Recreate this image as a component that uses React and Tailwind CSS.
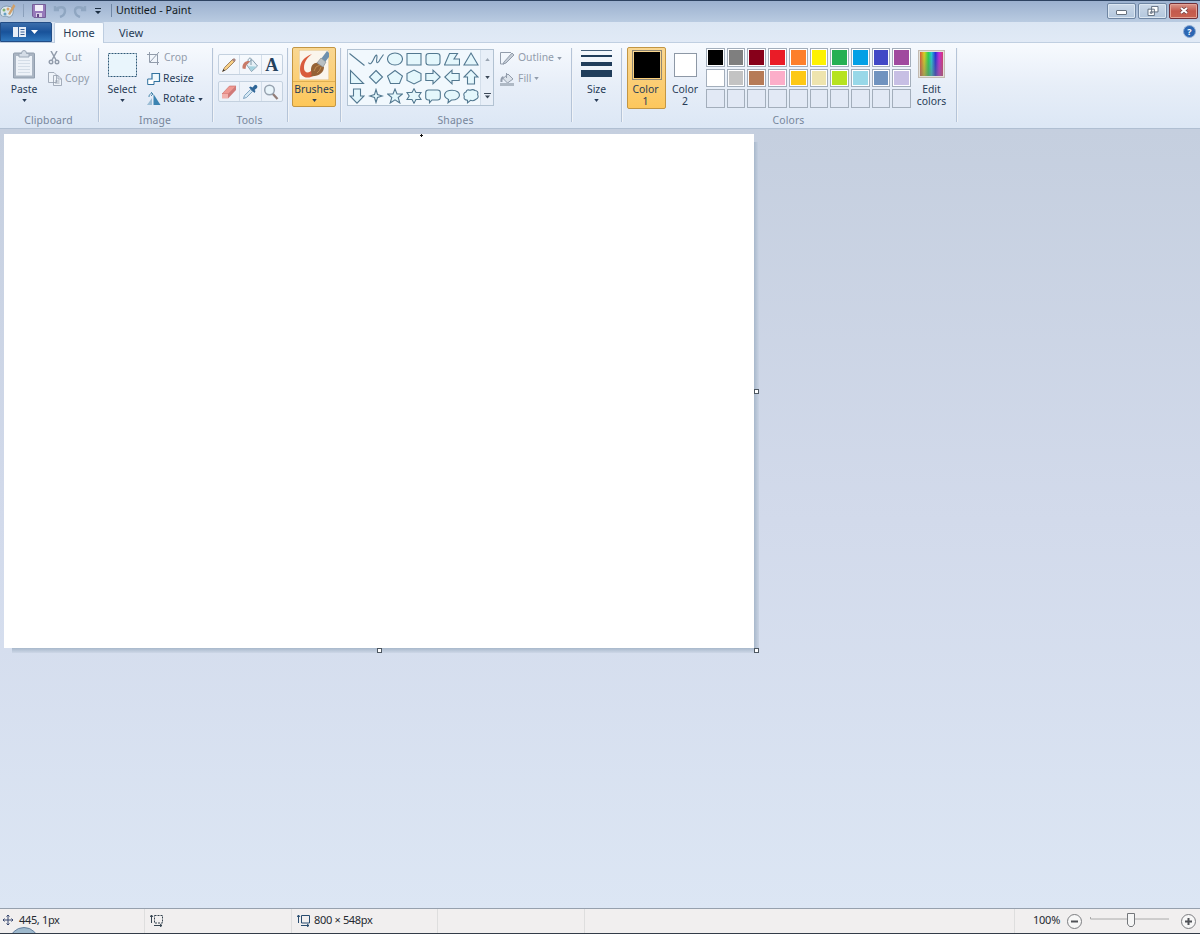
import React from 'react';

const colors = [
    '#000000', '#7f7f7f', '#87001a', '#ea1c27', '#fd7f2b', '#fdf200', '#25b052', '#02a0e6', '#4148c6', '#a04a9f',
    '#ffffff', '#c3c3c3', '#b67b57', '#fcaec9', '#fdc815', '#eee4ae', '#b6e321', '#98d8e8', '#7093bf', '#c7bfe4',
];

const shapes = [
    'M.5 2.5L15.5 14.5',
    'M.5 11.5C2 14.5 4 12 6 7.5C8 3 9.5 3 8.8 7.5C8 13 10 13 12 8.5L15.5 3.5',
    'M8 2C12 2 15.5 4.5 15.5 8S12 14 8 14S.5 11.5 .5 8S4 2 8 2Z',
    'M1 2.5H15V14H1Z',
    'M4 2.5H12Q15 2.5 15 5V11.5Q15 14 12 14H4Q1 14 1 11.5V5Q1 2.5 4 2.5Z',
    'M5.5 2.5H13.5L10 8H15.5V14H.5Z',
    'M8 2L15 14H1Z',
    'M1.5 1.5V14.5H14.5Z',
    'M8 1.5L14.5 8L8 14.5L1.5 8Z',
    'M8 1.5L15.5 7L12.5 14.5H3.5L.5 7Z',
    'M8 1L15 4.5V11.5L8 15L1 11.5V4.5Z',
    'M.8 4.5H8V1.2L15.2 8L8 14.8V11.5H.8Z',
    'M15.2 4.5H8V1.2L.8 8L8 14.8V11.5H15.2Z',
    'M8 .8L15 8H11.5V15H4.5V8H1Z',
    'M4.5 1H11.5V8H15L8 15.2L1 8H4.5Z',
    'M8 1.5L9.5 6.5L14.5 8L9.5 9.5L8 14.5L6.5 9.5L1.5 8L6.5 6.5Z',
    'M8 1L10 6H15.5L11.2 9.5L12.8 15L8 11.8L3.2 15L4.8 9.5L.5 6H6Z',
    'M8 .8L10 4.5H15L12.8 8L15 11.5H10L8 15.2L6 11.5H1L3.2 8L1 4.5H6Z',
    'M3.5 2H12.5Q15.3 2 15.3 4.5V9.5Q15.3 12 12.5 12H7L4.5 14.8V12H3.5Q.7 12 .7 9.5V4.5Q.7 2 3.5 2Z',
    'M4.5 11.5C-2 8.5 0 2.2 8 2.2C18 2.2 18 12.3 7.5 12L4 14.8Z',
    'M3 4Q4 1 7 2.3Q10 .8 12 2.5Q15.8 3 14.6 6.5Q16.2 10 13 11.3Q10 13.5 7.5 12.3L4.5 14.8V12.3Q.3 12 1.3 8.5Q-.2 5 3 4Z',
];

const Arrow = ({ className = '' }) => (
    <svg viewBox="0 0 6 4" className={`w-[5px] h-[3px] shrink-0 ${className}`}>
        <path d="M0 0H6L3 4Z" fill="currentColor" />
    </svg>
);

const Group = ({ label, className, children }) => (
    <div className={`relative flex flex-col h-full shrink-0 ${className}`}>
        <div className="h-[70px] flex items-start">{children}</div>
        <div className="text-center text-[#77869b] leading-[14px] tracking-[0.15px] pr-[2px]">{label}</div>
        <div className="absolute right-[-1px] top-[5px] h-[74px] w-[2px] bg-[#b5c4d8] border-r border-white/80" />
    </div>
);

const BigButton = ({ label, children, className = '' }) => (
    <div className={`flex flex-col items-center ${className}`}>
        {children}
        <div className="leading-[14px]">{label}</div>
        <Arrow className="mt-[3px]" />
    </div>
);

const SmallButton = ({ label, disabled, arrow, children }) => (
    <div className={`flex items-center h-[20.5px] whitespace-nowrap ${disabled ? 'text-[#929cab]' : ''}`}>
        <svg viewBox="0 0 14 14" className="w-[14px] h-[14px] mr-[2px]" fill="none" stroke="currentColor">
            {children}
        </svg>
        <span>{label}</span>
        {arrow && <Arrow className="ml-[3px]" />}
    </div>
);

const tools = [
    <g key="pencil">
        <path d="M1.5 14.5L3.5 10.5L12 2L14 4L5.5 12.5Z" fill="#f7cf85" stroke="#8d6f4c" strokeWidth=".8" />
        <path d="M11 3L13 5L15 3L13 1Z" fill="#a98580" />
        <path d="M1.5 14.5L2.5 12L4 13.5Z" fill="#333" />
    </g>,
    <g key="bucket">
        <path d="M4.5 7.5L10 2.5L15.5 9L9.5 14.5Z" fill="#e5f0f6" stroke="#7892a5" strokeWidth=".9" />
        <path d="M.5 11.5C0 6 3.5 3.5 8 4L5.5 7C4 7.5 4 9.5 3.5 12Z" fill="#c97a67" />
        <path d="M9 8V2C9 0 6 1 6 4" fill="none" stroke="#7893a5" strokeWidth=".9" />
        <path d="M6.5 9.2L14.5 9.5L9.5 14Z" fill="#a4d2df" />
    </g>,
    null,
    <g key="eraser">
        <path d="M1 10L8.5 2H15L7.5 10Z" fill="#ef9992" stroke="#c86863" strokeWidth=".6" />
        <path d="M7 10L15 2V6L7 14.5Z" fill="#d07a78" />
        <path d="M1 10H7V14.5H1Z" fill="#f1b1ad" />
    </g>,
    <g key="picker">
        <path d="M1.5 14.5L2.5 11.5L8.5 5.5L10.5 7.5L4.5 13.5Z" fill="#d4e7f3" stroke="#6893b5" strokeWidth=".8" />
        <path d="M7 3.5L12.5 9L13.5 7L12.5 6L15 4Q16.3 1 13 .8L10.5 3.5L8.5 2.5Z" fill="#2f6698" />
    </g>,
    <g key="magnifier" fill="none">
        <path d="M9.5 9.5L14.5 15" stroke="#927d77" strokeWidth="2.3" />
        <circle cx="6.5" cy="6" r="4.8" fill="#e9f5fb" stroke="#97a3b0" strokeWidth="1.5" />
    </g>,
];

const ToolRow = ({ items }) => (
    <div className="flex w-[65px] h-[21px] border border-[#c4d1df] rounded-[2px] bg-white/30">
        {items.map((tool, i) => (
            <div key={i} className={`flex-1 flex items-center justify-center ${i < 2 ? 'border-r border-[#d3deea]' : ''}`}>
                {tool ? (
                    <svg viewBox="0 0 16 16" className="w-[16px] h-[16px] -ml-px">{tool}</svg>
                ) : (
                    <span className="font-['Liberation_Serif',serif] font-bold text-[18px] leading-none text-[#24405c]">A</span>
                )}
            </div>
        ))}
    </div>
);

const TitleBar = () => (
    <div className="h-[22px] shrink-0 flex items-center border-t border-[#2e4361] bg-linear-to-b from-[#9cb1cf] to-[#b9cbe1] pb-[2px]">
        <svg viewBox="0 0 16 16" className="w-[16px] h-[16px]">
            <path d="M7 3C1 3-1 8 1 12C3 15 6 12 8 14C12 15 14 10 13 6Q11 3 7 3Z" fill="#dce7ee" stroke="#829bb1" />
            <circle cx="4" cy="7" r="1.5" fill="#80b071" />
            <circle cx="8" cy="6" r="1.5" fill="#d9a36a" />
            <circle cx="5" cy="11" r="1.5" fill="#67a0c4" />
            <path d="M8 11L13.5 1L15.5 3L10 12Z" fill="#cfa06a" />
        </svg>
        <div className="w-px h-[13px] bg-[#8ba0bb] ml-[7px]" />
        <svg viewBox="0 0 14 14" className="w-[14px] h-[14px] ml-[8px]">
            <path d="M.5 .5H13.5V13.5H2L.5 12Z" fill="#9679ba" stroke="#765f98" />
            <path d="M3 1H11V7H3Z" fill="#f1eef8" />
            <path d="M4 9H10V13H4Z" fill="#d9d0e7" />
            <path d="M5 10H7V13H5Z" fill="#624787" />
        </svg>
        <svg viewBox="0 0 14 14" className="w-[14px] h-[14px] ml-[7px]" fill="none" stroke="#8fa6c1" strokeWidth="2.4">
            <path d="M2 2V6H6M2.5 6C5 2.5 12 2 12 7C12 10 10 12 7 13" />
        </svg>
        <svg viewBox="0 0 14 14" className="w-[14px] h-[14px] ml-[6px]" fill="none" stroke="#8fa6c1" strokeWidth="2.4">
            <path d="M12 2V6H8M11.5 6C9 2.5 2 2 2 7C2 10 4 12 7 13" />
        </svg>
        <svg viewBox="0 0 8 7" className="w-[8px] h-[7px] ml-[7px] mt-[2px]" fill="#1c2e42">
            <path d="M1 0H7V1H1ZM1 3H7L4 6Z" />
        </svg>
        <div className="w-px h-[13px] bg-[#7087a5] ml-[9px]" />
        <div className="ml-[4px] text-[10.75px] text-[#101820]">Untitled - Paint</div>
        <div className="ml-auto mr-[2px] flex gap-[2px]">
            <div className="w-[29px] h-[16px] border border-[#6f86a3] rounded-[2px] bg-linear-to-b from-[#cbd8e8] to-[#b3c7dd] shadow-[inset_0_0_0_1px_#dce7f2] flex items-center justify-center">
                <div className="w-[11px] h-[5px] mt-[3px] border border-[#67727e] rounded-[1px] bg-white" />
            </div>
            <div className="w-[29px] h-[16px] border border-[#6f86a3] rounded-[2px] bg-linear-to-b from-[#cbd8e8] to-[#b3c7dd] shadow-[inset_0_0_0_1px_#dce7f2] flex items-center justify-center">
                <svg viewBox="0 0 12 11" className="w-[12px] h-[10px]" fill="#fff" stroke="#596879">
                    <path d="M4.5 .5H11.5V6.5H4.5ZM.5 3.5H7.5V10.5H.5ZM3 6.5H5V8H3Z" />
                </svg>
            </div>
            <div className="w-[29px] h-[16px] border border-[#713038] rounded-[2px] bg-linear-to-b from-[#d7978d] via-[#c4594c] to-[#c96350] shadow-[inset_0_0_0_1px_#e4a396] flex items-center justify-center">
                <svg viewBox="0 0 10 9" className="w-[10px] h-[9px]">
                    <path d="M2 2L8 7M8 2L2 7" stroke="#6c4144" strokeWidth="3.5" />
                    <path d="M2 2L8 7M8 2L2 7" stroke="#fff" strokeWidth="2" />
                </svg>
            </div>
        </div>
    </div>
);

const TabBar = () => (
    <div className="h-[21px] shrink-0 flex bg-linear-to-b from-[#dbe6f3] to-[#e1eaf6] text-[11px] shadow-[inset_0_-1px_0_#c0cfe1]">
        <div className="w-[52px] h-[20px] pr-px flex items-center justify-center text-white border border-[#224d86] bg-linear-to-b from-[#3b6eab] via-[#18529a] to-[#3178bd] rounded-tr-[2px]">
            <svg viewBox="0 0 13 10" className="w-[13px] h-[10px]">
                <path d="M0 0H13V10H0Z" fill="#e7eef7" />
                <path d="M5.5 0V10M7.5 2.5H11.5M7.5 5H11.5M7.5 7.5H11.5" stroke="#3a6297" />
            </svg>
            <svg viewBox="0 0 7 4" className="w-[7px] h-[4px] ml-[5px]"><path d="M0 0H7L3.5 4Z" fill="#fff" /></svg>
        </div>
        <div className="w-[50px] ml-[2px] text-center leading-[19px] bg-[#f8fbfe] border border-b-0 border-[#bdcde0] rounded-t-[2px]">Home</div>
        <div className="ml-[15px] leading-[21px]">View</div>
        <div className="ml-auto mr-[4px] mt-[3px] w-[13px] h-[13px] rounded-full bg-[#2b66b3] border border-[#91add4] text-white font-bold text-[9px] leading-[11px] text-center">?</div>
    </div>
);

const Ribbon = () => (
    <div className="h-[86px] shrink-0 flex bg-linear-to-b from-[#f7fafe] via-[#e7eef8] to-[#dce7f5] border-b border-[#b0bfd2]">
        <Group label="Clipboard" className="w-[99px]">
            <BigButton label="Paste" className="w-[48px] pt-[7px]">
                <svg viewBox="0 0 24 30" className="w-[24px] h-[30px] mb-[2px]">
                    <path d="M1.5 4Q1.5 3 2.5 3H21.5Q22.5 3 22.5 4V28H1.5Z" fill="#aab5c3" stroke="#919eae" />
                    <path d="M4 6H20V25.5H4Z" fill="#edf2f8" />
                    <path d="M7 3.5H9.5Q9.5 .5 12 .5T14.5 3.5H17V7H7Z" fill="#d5dde7" stroke="#9ba7b6" />
                    <path d="M6 10.5H18M6 13.5H18M6 16.5H18M6 19.5H18M6 22.5H18" stroke="#d4dde7" />
                </svg>
            </BigButton>
            <div className="pt-[5px]">
                <SmallButton label={<span className="ml-[1px]">Cut</span>} disabled>
                    <path d="M3 0L8 9M9 0L4 9" strokeWidth="1.5" />
                    <circle cx="3" cy="11" r="1.8" strokeWidth="1.4" />
                    <circle cx="9" cy="11" r="1.8" strokeWidth="1.4" />
                </SmallButton>
                <SmallButton label={<span className="ml-[1px]">Copy</span>} disabled>
                    <path d="M.5 .5H6L8.5 3V10.5H.5ZM5.5 3.5H10L13.5 7V13.5H5.5ZM10 3.5V7H13.5M7 9H11.5M7 11H11.5" fill="#eef3f9" strokeWidth=".8" />
                </SmallButton>
            </div>
        </Group>
        <Group label="Image" className="w-[114px]">
            <BigButton label="Select" className="w-[46px] pt-[10px]">
                <svg viewBox="0 0 29 24" className="w-[29px] h-[24px] mb-[5px]">
                    <path d="M.5 .5H28.5V23.5H.5Z" fill="#e9f5fc" stroke="#2e5876" strokeDasharray="2 1" />
                </svg>
            </BigButton>
            <div className="pt-[5px] ml-[2px]">
                <SmallButton label={<span className="ml-[1px]">Crop</span>} disabled>
                    <path d="M2.5 1V11.5H12M0 3.5H10.5V14M3 11L12 1" />
                </SmallButton>
                <SmallButton label="Resize">
                    <path d="M5 1.5H12.5V9.5H5Z" fill="#eef8fd" stroke="#33739f" strokeWidth="1.2" />
                    <path d="M5 7H.7V12.5H7V9.5" fill="#fff" stroke="#33739f" />
                </SmallButton>
                <SmallButton label="Rotate" arrow>
                    <path d="M6.5 2V13H13.5Z" fill="#3b83b1" stroke="none" />
                    <path d="M5 6V13H0Z" fill="#9cbdd5" stroke="none" />
                    <path d="M2 5C2 2 4 1 6 2M4 0L6 2L4 4" stroke="#4988ad" />
                </SmallButton>
            </div>
        </Group>
        <Group label="Tools" className="w-[75px]">
            <div className="pl-[5px] pt-[11px] flex flex-col gap-[6px]">
                <ToolRow items={tools.slice(0, 3)} />
                <ToolRow items={tools.slice(3)} />
            </div>
        </Group>
        <Group label="" className="w-[53px]">
            <div className="ml-[4px] mt-[4px] w-[44px] h-[60px] border border-[#c39643] rounded-[2px] bg-linear-to-b from-[#f9d792] to-[#fdc759] flex flex-col items-center">
                <svg viewBox="0 0 30 30" className="w-[30px] h-[30px] mt-[2px]">
                    <path d="M0 0H30V30H0Z" fill="#faf5ec" stroke="#e2bd79" />
                    <path d="M13 4C5 7 1 12 1 19C1 26 6 29 12 27C15 26 17 24 18 22L13 20C10 24 5 23 5 18C5 12 8 8 13 4Z" fill="#d95b3d" />
                    <path d="M12 20C12 15 15 12 20 13L25 17C25 23 19 27 11 26C14 25 12 23 12 20Z" fill="#956235" />
                    <path d="M15 21Q16 16 21 15M18 23Q21 21 22 17" fill="none" stroke="#bd8b50" />
                    <path d="M22 9L28 1L30 3V7L26 12Z" fill="#6e90ad" />
                    <path d="M18 13L22 8L27 12L24 17Z" fill="#b9c0c3" stroke="#8a9095" strokeWidth=".7" />
                </svg>
                <div className="w-full border-t border-[#e0af50] text-center leading-[14px] mt-[1px]">
                    <span className="-mx-1">Brushes</span>
                </div>
                <Arrow className="mt-[3px]" />
            </div>
        </Group>
        <Group label="Shapes" className="w-[231px]">
            <div className="flex ml-[6px] mt-[6px] w-[147px] h-[57px] border border-[#b2c2d2] bg-[#f1f8fd]">
                <div className="grid grid-cols-7 grid-rows-3 w-[132px] h-[55px] place-items-center text-[#527890]">
                    {shapes.map((d, i) => (
                        <svg key={i} viewBox="0 0 16 16" className="w-[16px] h-[16px]">
                            <path d={d} fill={i < 2 ? 'none' : '#e4f7fc'} stroke="currentColor" strokeWidth="1.1" />
                        </svg>
                    ))}
                </div>
                <div className="flex-1 grid grid-rows-3 place-items-center border-l border-[#d3deea] bg-[#e8eff8] text-[#3a4756]">
                    <Arrow className="rotate-180 text-[#9aa5b2]" />
                    <Arrow />
                    <svg viewBox="0 0 8 7" className="w-[7px] h-[6px]" fill="currentColor"><path d="M0 0H8V1.2H0ZM1 3H7L4 6.5Z" /></svg>
                </div>
            </div>
            <div className="ml-[6px] pt-[5px]">
                <SmallButton label={<span className="ml-[2px]">Outline</span>} disabled arrow>
                    <path d="M11 1.5H.5V13H4" />
                    <path d="M4 11L12 2L14 4L6 12L3 13Z" fill="#c4ccd6" />
                </SmallButton>
                <SmallButton label={<span className="ml-[2px]">Fill</span>} disabled arrow>
                    <path d="M3 6.5L8 2L13 7L7.5 11ZM6.5 6V1" fill="#dbe2ea" />
                    <path d="M3.5 5Q1 6 1.5 10" strokeWidth="2" />
                    <path d="M0 11H14V14H0Z" fill="#afb9c5" stroke="none" />
                </SmallButton>
            </div>
        </Group>
        <Group label="" className="w-[50px]">
            <BigButton label="Size" className="w-[49px] pt-[7px]">
                <div className="w-[31px] h-[27px] mb-[5px] flex flex-col justify-between">
                    <div className="h-px bg-[#45607b]" />
                    <div className="h-[2px] bg-[#203d5b]" />
                    <div className="h-[4px] bg-[#203d5b]" />
                    <div className="h-[7px] bg-[#203d5b]" />
                </div>
            </BigButton>
        </Group>
        <Group label="Colors" className="w-[335px]">
            <div className="ml-[5px] mt-[4px] w-[39px] h-[62px] border border-[#c39643] rounded-[2px] bg-linear-to-b from-[#f9d792] to-[#fdc75c] text-center">
                <div className="w-[30px] h-[30px] ml-[4px] mt-[2px] mb-[3px] border border-[#8f8773] p-px"><div className="h-full bg-black" /></div>
                <div className="leading-[12px] -ml-[2px]">Color<br />1</div>
            </div>
            <div className="w-[38px] pt-[10px] text-center">
                <div className="w-[23px] h-[24px] mx-auto mb-[6px] border border-[#8d98a6] bg-white" />
                <div className="leading-[12px]">Color<br />2</div>
            </div>
            <div className="ml-[2px] mt-[5px] w-[205px] h-[60px] grid grid-cols-10 grid-rows-3 gap-[2px]">
                {Array.from({ length: 30 }, (_, i) => (
                    <div key={i} className={`border border-[#a3aebb] p-px ${i < 20 ? 'bg-white' : 'bg-[#e2e9f5]'}`}>
                        {i < 20 && <div className="w-full h-full" style={{ backgroundColor: colors[i] }} />}
                    </div>
                ))}
            </div>
            <div className="w-[39px] ml-px pt-[7px] text-center">
                <div className="w-[27px] h-[28px] mx-auto mb-[5px] border border-[#c2bab1] p-px bg-[#e3e1da]">
                    <div className="relative h-full">
                        <div className="absolute inset-0 bg-[linear-gradient(90deg,#db5638,#ddd321_18%,#28d34e_36%,#22c8d3_50%,#252fda_67%,#c329df_83%,#db356e)]" />
                        <div className="absolute inset-0 bg-linear-to-b from-transparent to-[#77777788]" />
                    </div>
                </div>
                <div className="leading-[12px]">Edit<br />colors</div>
            </div>
        </Group>
    </div>
);

const Handle = ({ className }) => (
    <div className={`absolute w-[5px] h-[5px] border border-[#4d5761] bg-white ${className}`} />
);

const Workspace = () => (
    <div className="flex-1 pl-[4px] pt-[5px] bg-linear-to-b from-[#c5cfdf] via-[#d2daeb] to-[#dce6f4]">
        <div className="relative w-[750px] h-[514px] bg-white">
            <div className="absolute left-full top-[8px] -bottom-[5px] w-[5px] bg-linear-to-r from-[#a8b8cb] to-[#c9d3e3]" />
            <div className="absolute top-full left-[8px] right-0 h-[5px] bg-linear-to-b from-[#a8b8cb] to-[#cdd7e7]" />
            <Handle className="left-[750px] top-[255px]" />
            <Handle className="left-[373px] top-[514px]" />
            <Handle className="left-[750px] top-[514px]" />
            <svg viewBox="0 0 3 3" className="absolute left-[416px] top-0 w-[3px] h-[3px]"><path d="M1 0H2V1H3V2H2V3H1V2H0V1H1Z" fill="#111" /></svg>
        </div>
    </div>
);

const StatusBar = () => (
    <div className="relative h-[26px] shrink-0 flex items-center border-t border-[#96a0ad] border-b border-b-[#333c48] bg-[#f1efef] text-[11px] text-[#252a30] overflow-hidden">
        <div className="w-[145px] h-full flex items-center border-r border-[#dedede] pl-[2px] pb-[2px]">
            <svg viewBox="0 0 12 12" className="w-[12px] h-[12px] mr-[5px]" fill="none" stroke="#36466f">
                <path d="M6 1V11M1 6H11M4.5 2.5L6 1L7.5 2.5M4.5 9.5L6 11L7.5 9.5M2.5 4.5L1 6L2.5 7.5M9.5 4.5L11 6L9.5 7.5" />
            </svg>
            <span className="tracking-[-0.35px]">445, 1px</span>
        </div>
        <div className="w-[147px] h-full flex items-center border-r border-[#dedede] pl-[5px] pb-[2px]">
            <svg viewBox="0 0 13 13" className="w-[13px] h-[13px]" fill="none" stroke="#34434f">
                <path d="M1.5 1V9M0 3L1.5 1L3 3M4 11.5H12M10 10L12 11.5L10 13" />
                <path d="M4.5 1.5H12.5V9H4.5Z" strokeDasharray="2 1" />
            </svg>
        </div>
        <div className="w-[146px] h-full flex items-center border-r border-[#dedede] pl-[5px] pb-[2px]">
            <svg viewBox="0 0 13 13" className="w-[13px] h-[13px] mr-[4px]" fill="none" stroke="#294d70">
                <path d="M1.5 1V9M0 3L1.5 1L3 3M4 11.5H12M10 10L12 11.5L10 13M4.5 1.5H12.5V9H4.5Z" />
            </svg>
            <span className="tracking-[-0.33px]">800 × 548px</span>
        </div>
        <div className="w-[147px] h-full border-r border-[#dedede]" />
        <div className="w-[430px] h-full border-r border-[#dedede]" />
        <div className="flex items-center ml-[18px] pb-[2px]">
            <span className="w-[34px] tracking-[-0.25px]">100%</span>
            <svg viewBox="0 0 15 15" className="w-[15px] h-[15px] mt-[2px]" fill="#f7f7f7" stroke="#7c7d80">
                <circle cx="7.5" cy="7.5" r="7" />
                <path d="M4 7.5H11" stroke="#505257" strokeWidth="2" />
            </svg>
            <svg viewBox="0 0 80 16" className="w-[80px] h-[16px] ml-[8px]" fill="none" stroke="#aaa">
                <path d="M.5 5V7H79" />
                <path d="M37.5 1.5H44.5V12L42.5 14.5H39.5L37.5 12Z" fill="#f6f6f6" stroke="#74777b" />
            </svg>
            <svg viewBox="0 0 15 15" className="w-[15px] h-[15px] ml-[11px] mt-[2px] shrink-0" fill="#f7f7f7" stroke="#7c7d80">
                <circle cx="7.5" cy="7.5" r="7" />
                <path d="M4 7.5H11M7.5 4V11" stroke="#505257" strokeWidth="2" />
            </svg>
        </div>
        <div className="absolute left-[9px] -bottom-[24px] w-[30px] h-[30px] rounded-full border border-[#6681a0] bg-[#9db8cc]" />
    </div>
);

const App = () => (
    <div className="w-[1200px] h-[934px] flex flex-col overflow-hidden font-['Noto_Sans',sans-serif] text-[10.4px] text-[#273b56]">
        <TitleBar />
        <TabBar />
        <Ribbon />
        <Workspace />
        <StatusBar />
    </div>
);

export default App;
